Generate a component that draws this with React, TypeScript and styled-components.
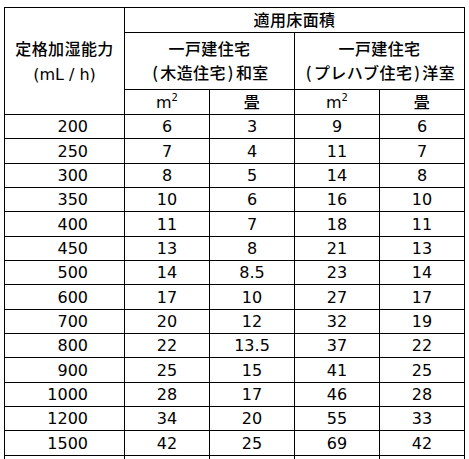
import { createGlobalStyle, styled } from 'styled-components';

const GlobalStyle = createGlobalStyle`
	html, body {
		margin: 0;
		padding: 0;
		background: #fff;
		overflow: hidden;
	}
	body {
		font-family: 'DejaVu Sans', 'Noto Sans CJK JP', sans-serif;
		color: #000;
	}
`;

const Wrapper = styled.div`
	padding: 7px 0 0 4px;
`;

const Table = styled.table`
	border-collapse: collapse;
	table-layout: fixed;
	width: 460px;
	font-size: 16px;
`;

const Cell = styled.td<{ $align?: 'right' | 'center' }>`
	border: 1px solid #000;
	padding: ${(p) => (p.$align === 'right' ? '0 36px 0 0' : '0')};
	text-align: ${(p) => p.$align || 'center'};
	vertical-align: middle;
	white-space: nowrap;
	line-height: 23px;
	font-family: 'DejaVu Sans', 'Noto Sans CJK JP', sans-serif;
`;

const HeadText = styled.span`
	font-family: 'Noto Sans CJK JP', sans-serif;
	font-weight: 500;
	letter-spacing: 0.4px;
`;

const Paren = styled.span`
	font-family: 'Noto Sans CJK JP', sans-serif;
	display: inline-block;
	width: 10px;
	text-align: center;
`;

const TitleLines = styled.div`
	line-height: 25px;
`;

const Row = styled.tr<{ $h: number }>`
	height: ${(p) => p.$h}px;
`;

const Sup = styled.sup`
	font-size: 10px;
	line-height: 0;
	vertical-align: 7px;
`;

const rows: [string, string, string, string, string][] = [
	['200', '6', '3', '9', '6'],
	['250', '7', '4', '11', '7'],
	['300', '8', '5', '14', '8'],
	['350', '10', '6', '16', '10'],
	['400', '11', '7', '18', '11'],
	['450', '13', '8', '21', '13'],
	['500', '14', '8.5', '23', '14'],
	['600', '17', '10', '27', '17'],
	['700', '20', '12', '32', '19'],
	['800', '22', '13.5', '37', '22'],
	['900', '25', '15', '41', '25'],
	['1000', '28', '17', '46', '28'],
	['1200', '34', '20', '55', '33'],
	['1500', '42', '25', '69', '42'],
];

const App = () => {
	return (
		<Wrapper>
			<GlobalStyle />
			<Table>
				<colgroup>
					<col style={{ width: 120 }} />
					<col style={{ width: 85 }} />
					<col style={{ width: 85 }} />
					<col style={{ width: 85 }} />
					<col style={{ width: 85 }} />
				</colgroup>
				<tbody>
					<Row $h={25}>
						<Cell rowSpan={3}>
							<TitleLines>
								<HeadText>定格加湿能力</HeadText>
								<br />
								(mL / h)
							</TitleLines>
						</Cell>
						<Cell colSpan={4}>
							<HeadText>適用床面積</HeadText>
						</Cell>
					</Row>
					<Row $h={57}>
						<Cell colSpan={2}>
							<HeadText>
								一戸建住宅
								<br />
								<Paren>(</Paren>木造住宅<Paren>)</Paren>和室
							</HeadText>
						</Cell>
						<Cell colSpan={2}>
							<HeadText>
								一戸建住宅
								<br />
								<Paren>(</Paren>プレハブ住宅<Paren>)</Paren>洋室
							</HeadText>
						</Cell>
					</Row>
					<Row $h={25}>
						<Cell>
							m<Sup>2</Sup>
						</Cell>
						<Cell>
							<HeadText>畳</HeadText>
						</Cell>
						<Cell>
							m<Sup>2</Sup>
						</Cell>
						<Cell>
							<HeadText>畳</HeadText>
						</Cell>
					</Row>
					{rows.map((r, i) => (
						<Row key={r[0]} $h={i % 3 === 1 ? 25 : 24}>
							<Cell $align='right'>{r[0]}</Cell>
							<Cell>{r[1]}</Cell>
							<Cell>{r[2]}</Cell>
							<Cell>{r[3]}</Cell>
							<Cell>{r[4]}</Cell>
						</Row>
					))}
					<Row $h={24}>
						<Cell />
						<Cell />
						<Cell />
						<Cell />
						<Cell />
					</Row>
				</tbody>
			</Table>
		</Wrapper>
	);
};

export default App;
